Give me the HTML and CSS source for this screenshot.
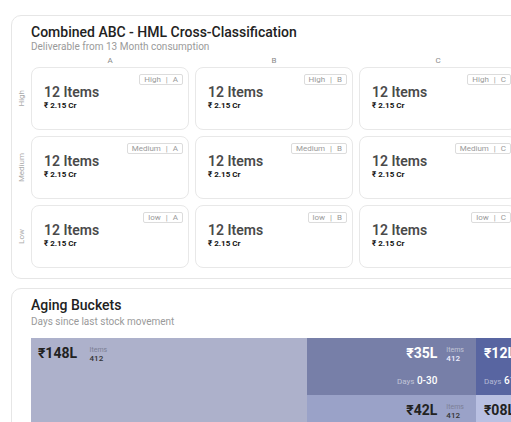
FILE: index.html
```html
<!DOCTYPE html>
<html lang="en">
<head>
<meta charset="UTF-8">
<title>Inventory Classification</title>
<link rel="stylesheet" href="styles.css">
</head>
<body>
<div class="page">
  <section class="card">
    <div class="card-head">
      <h2 class="card-title">Combined ABC - HML Cross-Classification</h2>
      <div class="card-sub">Deliverable from 13 Month consumption</div>
    </div>
    <div class="matrix-head">
      <span></span><span>A</span><span>B</span><span>C</span>
    </div>
    <div class="matrix">
      <div class="row-label">High</div>
      <div class="cell"><span class="tag">High<i>|</i>A</span><div class="count">12 Items</div><div class="amt">₹ 2.15 Cr</div></div>
      <div class="cell"><span class="tag">High<i>|</i>B</span><div class="count">12 Items</div><div class="amt">₹ 2.15 Cr</div></div>
      <div class="cell"><span class="tag">High<i>|</i>C</span><div class="count">12 Items</div><div class="amt">₹ 2.15 Cr</div></div>

      <div class="row-label">Medium</div>
      <div class="cell"><span class="tag">Medium<i>|</i>A</span><div class="count">12 Items</div><div class="amt">₹ 2.15 Cr</div></div>
      <div class="cell"><span class="tag">Medium<i>|</i>B</span><div class="count">12 Items</div><div class="amt">₹ 2.15 Cr</div></div>
      <div class="cell"><span class="tag">Medium<i>|</i>C</span><div class="count">12 Items</div><div class="amt">₹ 2.15 Cr</div></div>

      <div class="row-label">Low</div>
      <div class="cell"><span class="tag">low<i>|</i>A</span><div class="count">12 Items</div><div class="amt">₹ 2.15 Cr</div></div>
      <div class="cell"><span class="tag">low<i>|</i>B</span><div class="count">12 Items</div><div class="amt">₹ 2.15 Cr</div></div>
      <div class="cell"><span class="tag">low<i>|</i>C</span><div class="count">12 Items</div><div class="amt">₹ 2.15 Cr</div></div>
    </div>
  </section>

  <section class="card">
    <div class="card-head">
      <h2 class="card-title">Aging Buckets</h2>
      <div class="card-sub card-sub-wide">Days since last stock movement</div>
    </div>
    <div class="treemap">
      <div class="tile t-old light left">
        <div class="tile-val">₹148L</div>
        <div class="tile-meta"><span>Items</span><b>412</b></div>
        <div class="tile-days"><span>Days</span> 180+</div>
      </div>
      <div class="tile t-0 dark right">
        <div class="tile-val">₹35L</div>
        <div class="tile-meta"><span>Items</span><b>412</b></div>
        <div class="tile-days"><span>Days</span> 0-30</div>
      </div>
      <div class="tile t-61 dark left">
        <div class="tile-val">₹12L</div>
        <div class="tile-meta"><span>Items</span><b>412</b></div>
        <div class="tile-days"><span>Days</span> 61-90</div>
      </div>
      <div class="tile t-31 light right">
        <div class="tile-val">₹42L</div>
        <div class="tile-meta"><span>Items</span><b>412</b></div>
        <div class="tile-days"><span>Days</span> 31-60</div>
      </div>
      <div class="tile t-91 light left">
        <div class="tile-val">₹08L</div>
        <div class="tile-meta"><span>Items</span><b>412</b></div>
        <div class="tile-days"><span>Days</span> 91-180</div>
      </div>
    </div>
  </section>
</div>
</body>
</html>
```

FILE: styles.css
```css
html, body { margin: 0; overflow: hidden; background: #fff; }
body { font-family: Roboto, "Liberation Sans", sans-serif; color: #222; }
.page { padding: 15px 0 0 11px; width: 640px; display: flex; flex-direction: column; gap: 9px; }

.card { border: 1px solid #e6e6e6; border-radius: 10px; padding: 9px 0 10px 19px; background: #fff; }
.card-title { margin: 0; font-size: 14px; line-height: 15px; font-weight: 500; color: #222; }
.card-sub { padding-top: 1px; font-size: 10px; line-height: 11px; color: #9a9a9a; }
.card-sub-wide { padding-top: 3px; }

/* ABC x HML matrix */
.matrix-head, .matrix { display: grid; grid-template-columns: 7px repeat(3, 158px); column-gap: 6px; margin-left: -13px; }
.matrix-head { margin-top: 4px; margin-bottom: 1px; font-size: 8px; line-height: 10px; color: #8a8a8a; text-align: center; }
.matrix { row-gap: 6px; }
.row-label { writing-mode: vertical-rl; transform: rotate(180deg); align-self: center; justify-self: center; font-size: 8px; color: #aaa; }
.cell { position: relative; height: 63px; box-sizing: border-box; padding: 16px 12px 0; border: 1px solid #e8e8e8; border-radius: 8px; }
.tag { position: absolute; top: 6px; right: 5px; padding: 0 4px; border: 1px solid #dcdcdc; border-radius: 2px; font-size: 8px; line-height: 9px; color: #9a9a9a; }
.tag i { font-style: normal; margin: 0 5px; }
.count { font-size: 14px; line-height: 16px; font-weight: 600; color: #4a4a4a; }
.amt { margin-top: 1px; font-size: 8px; line-height: 10px; font-weight: 700; color: #111; }

/* aging treemap */
.treemap { margin-top: 11px; display: grid; grid-template-columns: 276px 169px 130px; grid-template-rows: 57px 110px; }
.tile { display: grid; grid-template-columns: auto auto; grid-template-rows: auto 1fr; column-gap: 9px; padding: 7px 12px 7px 8px; }
.tile.right { justify-content: end; }
.tile.left { justify-content: start; }
.t-old { grid-row: span 2; background: #adb1cb; padding-left: 7px; }
.t-0 { background: #777fa8; }
.t-61 { background: #5865a1; }
.t-31 { background: #9aa2c8; }
.t-91 { background: #b9c0e2; }
.tile-val { font-size: 14px; line-height: 16px; font-weight: 700; justify-self: end; }
.tile.left .tile-val, .tile.left .tile-days { justify-self: start; }
.tile-meta { display: flex; flex-direction: column; padding-top: 1px; }
.tile-meta span { font-size: 7px; line-height: 8px; }
.tile-meta b { font-size: 8px; line-height: 9px; font-weight: 500; }
.tile-days { grid-column: 1; align-self: end; justify-self: end; font-size: 10px; line-height: 12px; font-weight: 500; white-space: nowrap; }
.tile-days span { font-size: 8px; font-weight: 400; }
.light { color: #222; }
.light .tile-meta span { color: #7c7f95; }
.light .tile-meta b { color: #333; }
.light .tile-days span { color: #666; }
.dark { color: #fff; }
.dark .tile-meta span, .dark .tile-days span { color: rgba(255, 255, 255, 0.55); }
.dark .tile-meta b { color: #eef; }
```
